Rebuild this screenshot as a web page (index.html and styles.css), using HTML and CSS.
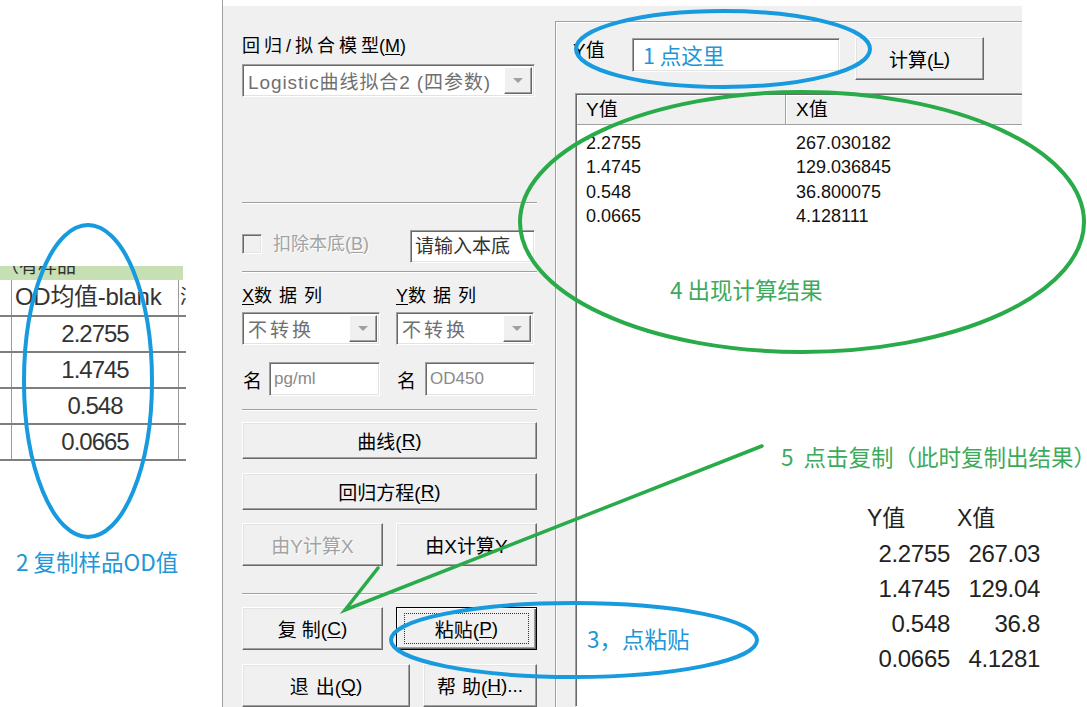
FILE: index.html
```html
<!DOCTYPE html>
<html lang="zh">
<head>
<meta charset="utf-8">
<title>回归/拟合</title>
<link rel="stylesheet" href="styles.css">
</head>
<body>
<div class="stage">

  <div class="sheet">
    <div class="band"><span>（有样品</span></div>
    <div class="srow shead"><div class="sc0"></div><div class="sc1">OD均值-blank</div><div class="sc2">浓</div></div>
    <div class="srow"><div class="sc0"></div><div class="sc1 num">2.2755</div><div class="sc2"></div></div>
    <div class="srow"><div class="sc0"></div><div class="sc1 num">1.4745</div><div class="sc2"></div></div>
    <div class="srow"><div class="sc0"></div><div class="sc1 num">0.548</div><div class="sc2"></div></div>
    <div class="srow"><div class="sc0"></div><div class="sc1 num">0.0665</div><div class="sc2"></div></div>
  </div>

  <div class="dialog">
    <div class="panel">
      <div class="lbl lbl-model"><span class="sp4">回归/拟合模</span>型(<u>M</u>)</div>
      <div class="combo combo-model"><span class="combo-text wide">Logistic曲线拟合2 (四参数)</span><span class="drop"><i></i></span></div>
      <div class="sep sep1"></div>
      <div class="row-bg">
        <span class="chk"></span>
        <span class="chk-lbl">扣除本底(<u>B</u>)</span>
        <div class="field field-bg">请输入本底</div>
      </div>
      <div class="sep sep2"></div>
      <div class="grid2 cols-lbl">
        <div class="lbl"><u>X</u><span class="sp7">数据</span>列</div>
        <div class="lbl"><u>Y</u><span class="sp7">数据</span>列</div>
      </div>
      <div class="grid2 cols-combo">
        <div class="combo"><span class="combo-text"><span class="sp3">不转</span>换</span><span class="drop"><i></i></span></div>
        <div class="combo"><span class="combo-text"><span class="sp3">不转</span>换</span><span class="drop"><i></i></span></div>
      </div>
      <div class="grid2 cols-name">
        <div class="name"><span class="name-lbl">名</span><div class="field name-field n-left">pg/ml</div></div>
        <div class="name"><span class="name-lbl">名</span><div class="field name-field n-right">OD450</div></div>
      </div>
      <div class="sep sep3"></div>
      <div class="btn b-curve">曲线(<u>R</u>)</div>
      <div class="btn b-eq">回归方程(<u>R</u>)</div>
      <div class="grid2 b-row1">
        <div class="btn disabled">由Y计算X</div>
        <div class="btn">由X计算Y</div>
      </div>
      <div class="sep sep4"></div>
      <div class="grid2 b-row2">
        <div class="btn"><span class="sp5">复</span>制(<u>C</u>)</div>
        <div class="btn focus"><span class="focus-rect"></span>粘贴(<u>P</u>)</div>
      </div>
      <div class="grid2 b-row3">
        <div class="btn"><span class="sp7">退</span>出(<u>Q</u>)</div>
        <div class="btn"><span class="sp6">帮</span>助(<u>H</u>)...</div>
      </div>
    </div>

    <div class="group">
      <div class="top-row">
        <div class="ylbl">Y值</div>
        <div class="field yinput"><span class="note-in">1 点这里</span></div>
        <div class="btn calc">计算(<u>L</u>)</div>
      </div>
      <div class="list">
        <div class="lhead">
          <div class="hcell h1">Y值</div>
          <div class="hcell h2">X值</div>
        </div>
        <div class="lrows">
          <div class="lrow"><span>2.2755</span><span>267.030182</span></div>
          <div class="lrow"><span>1.4745</span><span>129.036845</span></div>
          <div class="lrow"><span>0.548</span><span>36.800075</span></div>
          <div class="lrow"><span>0.0665</span><span>4.128111</span></div>
        </div>
      </div>
    </div>
  </div>

  <div class="paste">
    <div class="ph ph1">Y值</div><div class="ph ph2">X值</div>
    <div class="pv">2.2755</div><div class="pv">267.03</div>
    <div class="pv">1.4745</div><div class="pv">129.04</div>
    <div class="pv">0.548</div><div class="pv">36.8</div>
    <div class="pv">0.0665</div><div class="pv">4.1281</div>
  </div>

  <svg class="annot" width="1087" height="707" viewBox="0 0 1087 707">
    <ellipse class="blue" cx="723" cy="49" rx="147" ry="38"/>
    <ellipse class="blue" cx="88" cy="381" rx="64" ry="156"/>
    <ellipse class="blue" cx="574" cy="640" rx="183" ry="37"/>
    <ellipse class="green" cx="802" cy="222" rx="282" ry="130"/>
    <polyline class="green" points="762,446 345,610 378,568"/>
  </svg>

  <div class="note blue-t n2">2 复制样品OD值</div>
  <div class="note green-t n4">4 出现计算结果</div>
  <div class="note green-t n5">5  点击复制（此时复制出结果）</div>
  <div class="note blue-t n3">3，点粘贴</div>
</div>
</body>
</html>
```

FILE: styles.css
```css
* { box-sizing: border-box; margin: 0; padding: 0; }
html, body { width: 1087px; height: 707px; overflow: hidden; background: #fff; }
body { font-family: "Liberation Sans", "Noto Sans CJK SC", sans-serif; color: #000; }
u { text-decoration: underline; text-underline-offset: 2px; text-decoration-thickness: 1px; }

.stage { position: relative; width: 1087px; height: 707px; overflow: hidden; }

/* spreadsheet fragment */
.sheet { position: absolute; left: 0; top: 266px; width: 186px; overflow: hidden; color: #333; }
.band { width: 183px; height: 14px; background: #c6e0b4; overflow: hidden; }
.band span { display: block; font-size: 19px; line-height: 20px; margin-top: -9px; color: #333; }
.srow { display: grid; grid-template-columns: 12px 167px 7px; height: 36px; border-bottom: 2px solid #7f7f7f; width: 186px; }
.srow.shead { height: 37px; }
.sc0, .sc1 { border-right: 1px solid #9a9a9a; }
.sc1 { font-size: 24px; line-height: 34px; letter-spacing: -0.3px; padding-left: 3px; white-space: nowrap; overflow: hidden; }
.sc1.num { text-align: center; letter-spacing: -1px; padding-left: 0; }
.sc2 { font-size: 20px; line-height: 34px; padding-left: 1px; overflow: hidden; white-space: nowrap; }

/* dialog */
.dialog {
  position: absolute; left: 222px; top: 0; width: 800px; height: 707px;
  border-left: 1px solid #a0a0a0;
  background: linear-gradient(#fff 0, #fff 6px, #f0f0f0 6px);
  display: flex; overflow: hidden;
}
.panel { width: 332px; flex: none; padding-left: 19px; display: flex; flex-direction: column; font-size: 18px; }

.sp3 { letter-spacing: 3px; }
.sp4 { letter-spacing: 4px; }
.sp5 { letter-spacing: 5px; }
.sp6 { letter-spacing: 6px; }
.sp7 { letter-spacing: 7px; }

.lbl { line-height: 22px; height: 22px; white-space: nowrap; }
.lbl-model { margin-top: 35px; }

.field {
  background: #fff;
  border: 1px solid; border-color: #a0a0a0 #fff #fff #a0a0a0;
  box-shadow: inset 1px 1px 0 #696969, inset -1px -1px 0 #e3e3e3;
}
.combo {
  display: flex; align-items: center; justify-content: space-between;
  background: #fff; height: 33px; padding: 2px;
  border: 1px solid; border-color: #a0a0a0 #fff #fff #a0a0a0;
  box-shadow: inset 1px 1px 0 #696969, inset -1px -1px 0 #e3e3e3;
}
.combo-text { color: #707070; padding-left: 3px; font-size: 19px; white-space: nowrap; }
.combo-text.wide { letter-spacing: 0.9px; }
.drop {
  width: 28px; height: 100%; flex: none; display: flex; align-items: center; justify-content: center;
  background: #f0f0f0;
  border: 1px solid; border-color: #fff #696969 #696969 #fff;
  box-shadow: inset -1px -1px 0 #a0a0a0;
}
.drop i { display: block; width: 0; height: 0; border-left: 5px solid transparent; border-right: 5px solid transparent; border-top: 5px solid #a0a0a0; }
.combo-model { width: 293px; margin-top: 7px; }

.sep { width: 295px; height: 2px; border-top: 1px solid #a0a0a0; border-bottom: 1px solid #fff; flex: none; }
.sep1 { margin-top: 105px; }
.sep2 { margin-top: 8px; }
.sep3 { margin-top: 13px; }
.sep4 { margin-top: 27px; }

.row-bg { margin-top: 26px; height: 34px; display: flex; align-items: flex-start; width: 293px; }
.chk {
  width: 20px; height: 20px; margin-top: 4px; flex: none; background: #f0f0f0;
  border: 1px solid; border-color: #a0a0a0 #fff #fff #a0a0a0;
  box-shadow: inset 1px 1px 0 #696969, inset -1px -1px 0 #e3e3e3;
}
.chk-lbl { margin-left: 11px; color: #a3a3a3; text-shadow: 1px 1px 0 #fff; line-height: 28px; font-size: 18px; }
.field-bg { margin-left: auto; width: 125px; height: 33px; font-size: 19px; line-height: 31px; padding-left: 4px; color: #333; white-space: nowrap; overflow: hidden; }

.grid2 { display: grid; grid-template-columns: 141px 141px; column-gap: 13px; }
.cols-lbl { margin-top: 12px; }
.cols-combo { margin-top: 5px; }
.cols-combo .combo { width: 138px; }
.cols-name { margin-top: 17px; height: 34px; }
.name { display: flex; align-items: center; }
.name-lbl { width: 27px; flex: none; padding-left: 1px; font-size: 19px; }
.name-field { height: 34px; line-height: 32px; padding-left: 4px; color: #8a8a8a; font-size: 17px; }
.n-left { width: 111px; }
.n-right { width: 110px; margin-left: 2px; }

.btn {
  position: relative;
  display: flex; align-items: center; justify-content: center;
  height: 43px; background: #f0f0f0; font-size: 19px; white-space: nowrap;
  border: 1px solid; border-color: #fff #696969 #696969 #fff;
  box-shadow: inset -1px -1px 0 #a0a0a0, inset 1px 1px 0 #e3e3e3;
}
.btn.disabled { color: #a3a3a3; text-shadow: 1px 1px 0 #fff; }
.btn.focus { border-color: #000; box-shadow: inset 1px 1px 0 #fff, inset -1px -1px 0 #696969, inset -2px -2px 0 #a0a0a0; }
.focus-rect { position: absolute; inset: 5px 7px; border: 1px dotted #333; }
.b-curve { width: 295px; margin-top: 11px; }
.b-eq { width: 295px; margin-top: 14px; }
.b-row1 { margin-top: 13px; }
.b-row2 { margin-top: 12px; }
.b-row3 { margin-top: 14px; grid-template-columns: 168px 114px; }

/* right group */
.group {
  flex: 1; margin-top: 21px;
  border-top: 1px solid #a0a0a0; border-left: 1px solid #a0a0a0;
  box-shadow: inset 1px 1px 0 #fff;
  padding: 16px 0 0 19px;
  display: flex; flex-direction: column;
}
.top-row { display: flex; align-items: flex-start; }
.ylbl { width: 57px; flex: none; font-size: 19px; line-height: 22px; margin-top: 2px; margin-left: -2px; }
.yinput { width: 208px; height: 34px; flex: none; display: flex; align-items: center; padding-left: 10px; margin-left: 2px; }
.note-in { font-family: "Noto Sans CJK SC", sans-serif; font-size: 21.5px; color: #2296d6; line-height: 1; }
.calc { width: 129px; flex: none; margin-left: 15px; margin-top: -1px; }

.list {
  margin-top: 13px; width: 470px; flex: 1; background: #fff;
  border: 1px solid; border-color: #a0a0a0 #fff #fff #a0a0a0;
  box-shadow: inset 1px 1px 0 #696969;
  padding: 1px 0 0 1px;
}
.lhead { display: flex; height: 30px; }
.hcell {
  height: 30px; background: #f0f0f0; font-size: 19px; line-height: 30px;
  border-right: 1px solid #a0a0a0; border-bottom: 1px solid #a0a0a0;
  box-shadow: inset 1px 1px 0 #fff;
}
.h1 { width: 209px; padding-left: 9px; }
.h2 { flex: 1; padding-left: 10px; }
.lrows { padding-top: 6px; font-size: 18px; color: #111; }
.lrow { display: grid; grid-template-columns: 209px 1fr; height: 24.3px; line-height: 24px; }
.lrow span:first-child { padding-left: 9px; }
.lrow span:last-child { padding-left: 10px; }

/* pasted table */
.paste {
  position: absolute; left: 860px; top: 501px;
  display: grid; grid-template-columns: 90px 90px; grid-auto-rows: 35px;
  font-size: 24px; line-height: 35px; color: #222;
}
.ph { font-size: 23px; }
.ph1 { padding-left: 7px; }
.ph2 { padding-left: 7px; }
.pv { text-align: right; letter-spacing: -0.3px; }

/* annotations */
.annot { position: absolute; left: 0; top: 0; pointer-events: none; }
.annot .blue { fill: none; stroke: #179ade; stroke-width: 4; }
.annot .green { fill: none; stroke: #2aab4a; stroke-width: 4; stroke-linejoin: miter; stroke-linecap: round; }
.annot polyline.green { stroke-width: 3.5; }

.note { position: absolute; font-family: "Noto Sans CJK SC", sans-serif; font-size: 22.5px; line-height: 30px; white-space: pre; }
.blue-t { color: #2296d6; }
.green-t { color: #3caa5b; }
.n2 { left: 16px; top: 546px; }
.n4 { left: 670px; top: 274px; }
.n5 { left: 781px; top: 441px; }
.n3 { left: 587px; top: 623px; }
```
